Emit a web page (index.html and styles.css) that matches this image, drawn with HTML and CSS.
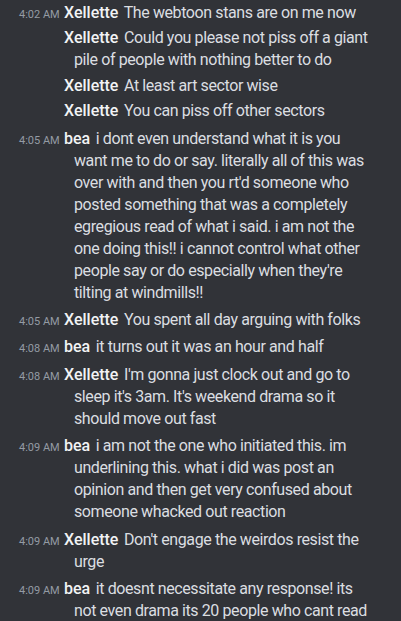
FILE: index.html
```html
<!DOCTYPE html>
<html lang="en">
<head>
    <meta charset="UTF-8">
    <meta name="viewport" content="width=device-width, initial-scale=1.0">
    <title>Chat</title>
    <link rel="stylesheet" href="styles.css">
</head>
<body>
    <!-- Messages (compact mode) -->
    <div class="chat">
        <div class="message group-start">
            <span class="timestamp">4:02 AM</span><span class="username">Xellette</span> The webtoon stans are on me now
        </div>
        <div class="message">
            <span class="timestamp hidden">4:02 AM</span><span class="username">Xellette</span> Could you please not piss off a giant pile of people with nothing better to do
        </div>
        <div class="message">
            <span class="timestamp hidden">4:02 AM</span><span class="username">Xellette</span> At least art sector wise
        </div>
        <div class="message">
            <span class="timestamp hidden">4:02 AM</span><span class="username">Xellette</span> You can piss off other sectors
        </div>
        <div class="message group-start">
            <span class="timestamp">4:05 AM</span><span class="username">bea</span> i dont even understand what it is you want me to do or say. literally all of this was over with and then you rt'd someone who posted something that was a completely egregious read of what i said. i am not the one doing this!! i cannot control what other people say or do especially when they're tilting at windmills!!
        </div>
        <div class="message group-start">
            <span class="timestamp">4:05 AM</span><span class="username">Xellette</span> You spent all day arguing with folks
        </div>
        <div class="message group-start">
            <span class="timestamp">4:08 AM</span><span class="username">bea</span> it turns out it was an hour and half
        </div>
        <div class="message group-start">
            <span class="timestamp">4:08 AM</span><span class="username">Xellette</span> I'm gonna just clock out and go to sleep it's 3am. It's weekend drama so it should move out fast
        </div>
        <div class="message group-start">
            <span class="timestamp">4:09 AM</span><span class="username">bea</span> i am not the one who initiated this. im underlining this. what i did was post an opinion and then get very confused about someone whacked out reaction
        </div>
        <div class="message group-start">
            <span class="timestamp">4:09 AM</span><span class="username">Xellette</span> Don't engage the weirdos resist the urge
        </div>
        <div class="message group-start">
            <span class="timestamp">4:09 AM</span><span class="username">bea</span> it doesnt necessitate any response! its not even drama its 20 people who cant read
        </div>
    </div>
</body>
</html>
```

FILE: styles.css
```css
body {
    font-family: Roboto, "Noto Sans", sans-serif;
    background-color: #313338;
    color: #dbdee1;
    margin: 0;
    padding: 0;
}

.message {
    padding: 2px 24px 1.4px 74px;
    text-indent: -55px;
    font-size: 16px;
    line-height: 22px;
    letter-spacing: -0.4px;
}

.group-start {
    margin-top: 2px;
}

.message:first-child {
    margin-top: 0;
}

.timestamp {
    display: inline-block;
    width: 45px;
    text-indent: 0;
    font-size: 11px;
    line-height: 11px;
    letter-spacing: 0;
    color: #949ba4;
}

.timestamp.hidden {
    visibility: hidden;
}

.username {
    font-weight: 500;
    letter-spacing: 0;
    color: #f2f3f5;
    margin-right: 2px;
}
```
